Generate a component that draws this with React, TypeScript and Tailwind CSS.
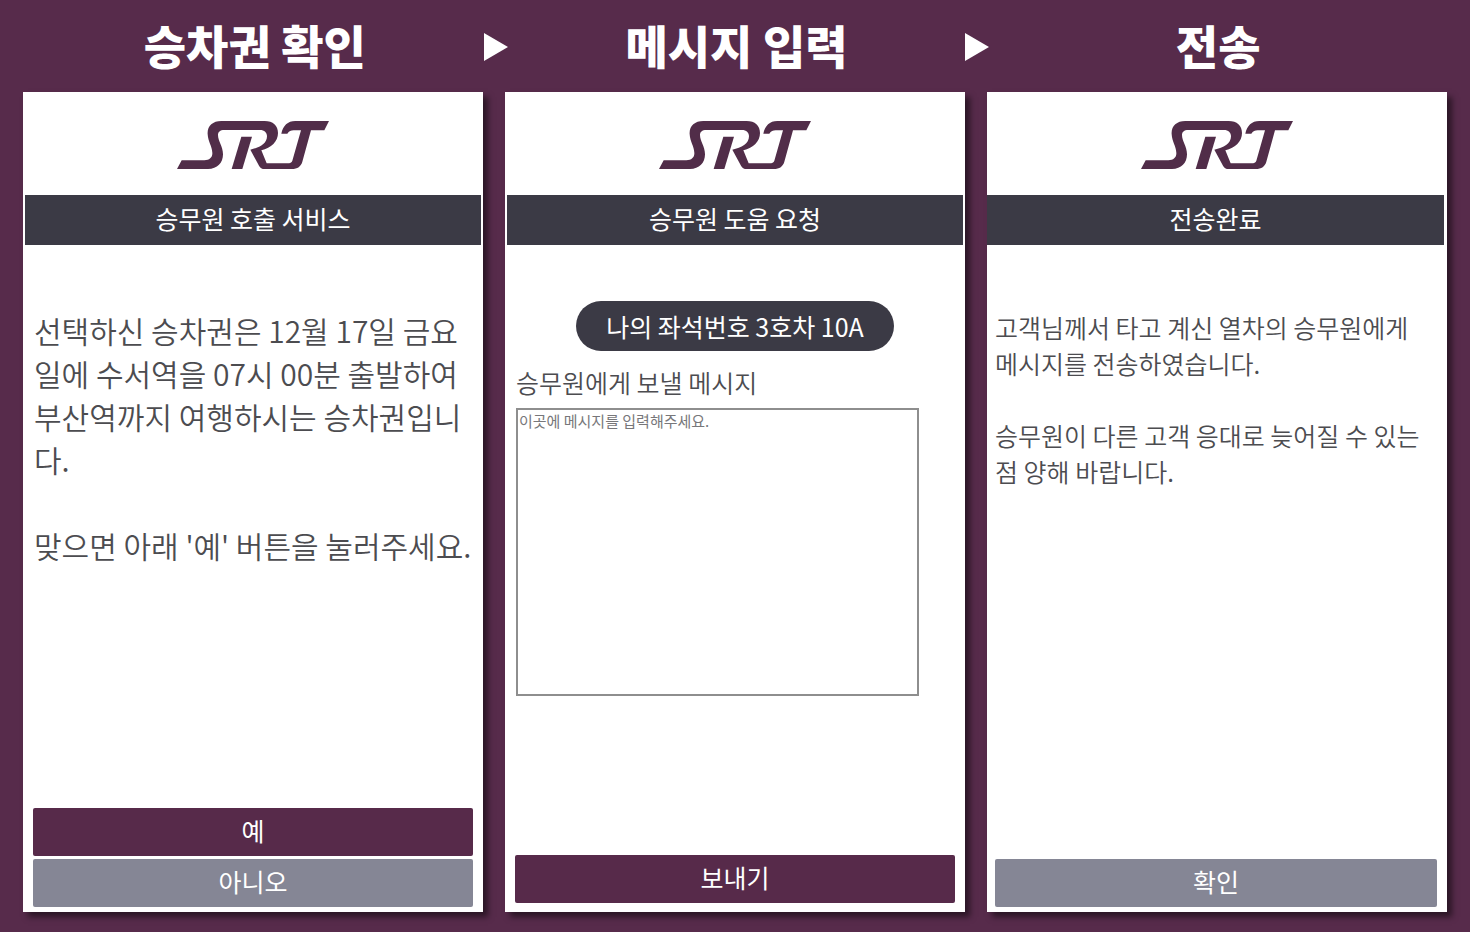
import type { ReactNode } from "react";

function SrtLogo() {
  return (
    <svg viewBox="52 46 456 144" className="h-12 w-[152px]" fill="#512d49" role="img" aria-label="SRT">
      <path d="M52 190L66 164H134C150 164 159 155 158 141C157 122 145 107 144 86C142 62 158 46 185 46H315C340 46 355 60 355 82C355 107 335 127 305 134L321 173H384C391 173 396 171 398 165L424 74H402C394 74 388 77 383 84H365C370 60 384 46 407 46H508L494 74H454L428 168C424 182 414 190 396 190H316C306 190 302 187 298 180L272 132C300 126 322 114 322 92C322 81 314 73 301 73H194C181 73 175 79 175 88C175 106 190 122 190 146C190 172 173 190 145 190Z" />
      <path d="M245 93H277L248 190H216Z" />
    </svg>
  );
}

function Arrow() {
  return (
    <svg viewBox="0 0 24 28" className="h-7 w-6 shrink-0" fill="#ffffff" aria-hidden="true">
      <path d="M0 0L24 14L0 28Z" />
    </svg>
  );
}

function StepTitle({ children }: { children: ReactNode }) {
  return (
    <h2 className="flex-1 pb-1.5 text-center text-[46px] leading-[60px] font-black text-white">{children}</h2>
  );
}

function Screen({
  title,
  barClass,
  footerClass,
  footer,
  children,
}: {
  title: string;
  barClass: string;
  footerClass: string;
  footer: ReactNode;
  children: ReactNode;
}) {
  return (
    <section className="flex min-w-0 flex-col bg-white shadow-[5px_5px_6px_rgba(0,0,0,0.5)]">
      <div className="flex justify-center pt-[29px] pb-[26px]">
        <SrtLogo />
      </div>
      <h3 className={`bg-[#3b3a45] pb-1 text-center text-[25px] leading-[46px] text-white ${barClass}`}>
        {title}
      </h3>
      <div className="flex-1">{children}</div>
      <div className={`flex flex-col gap-[3px] ${footerClass}`}>{footer}</div>
    </section>
  );
}

function ActionButton({ tone, children }: { tone: "primary" | "muted"; children: ReactNode }) {
  return (
    <button
      type="button"
      className={`rounded-xs pb-1 text-[25px] leading-[44px] text-white ${
        tone === "primary" ? "bg-[#572a4a]" : "bg-[#858695]"
      }`}
    >
      {children}
    </button>
  );
}

export default function App() {
  return (
    <main className="flex min-h-screen flex-col bg-[#572b4b] pb-5 font-['Noto_Sans_CJK_KR',sans-serif] text-[#4c4c50]">
      <header className="flex items-center pt-3.5 pr-[23px] pb-3 pl-[26px]">
        <StepTitle>승차권 확인</StepTitle>
        <Arrow />
        <StepTitle>메시지 입력</StepTitle>
        <Arrow />
        <StepTitle>전송</StepTitle>
      </header>
      <div className="grid flex-1 grid-cols-3 gap-[22px] px-[23px]">
        <Screen
          title="승무원 호출 서비스"
          barClass="mx-0.5"
          footerClass="px-[10px] pb-[5px]"
          footer={
            <>
              <ActionButton tone="primary">예</ActionButton>
              <ActionButton tone="muted">아니오</ActionButton>
            </>
          }
        >
          <div className="px-[11px] pt-16 text-[30px] leading-[43px] font-[350]">
            <p>
              선택하신 승차권은 12월 17일 금요
              <br />
              일에 수서역을 07시 00분 출발하여
              <br />
              부산역까지 여행하시는 승차권입니
              <br />
              다.
            </p>
            <p className="mt-[43px] whitespace-nowrap">맞으면 아래 '예' 버튼을 눌러주세요.</p>
          </div>
        </Screen>

        <Screen
          title="승무원 도움 요청"
          barClass="mx-0.5"
          footerClass="px-[10px] pb-[9px]"
          footer={<ActionButton tone="primary">보내기</ActionButton>}
        >
          <div className="flex flex-col items-start px-[11px] pt-14">
            <p className="self-center rounded-full bg-[#3b3a45] px-[30px] text-[25px] leading-[50px] text-white">
              나의 좌석번호 3호차 10A
            </p>
            <label htmlFor="message" className="mt-[13px] text-[25px] leading-9 font-[350]">
              승무원에게 보낼 메시지
            </label>
            <textarea
              id="message"
              placeholder="이곳에 메시지를 입력해주세요."
              className="mt-2 h-72 w-[92%] resize-none border-2 border-[#8e8e8e] bg-white px-px text-[15px] leading-[22px] placeholder:text-[#77777a]"
            />
          </div>
        </Screen>

        <Screen
          title="전송완료"
          barClass="mr-[3px]"
          footerClass="pr-[10px] pb-[5px] pl-2"
          footer={<ActionButton tone="muted">확인</ActionButton>}
        >
          <div className="px-2 pt-16 text-[25px] leading-9 font-[350]">
            <p>
              고객님께서 타고 계신 열차의 승무원에게
              <br />
              메시지를 전송하였습니다.
            </p>
            <p className="mt-9">
              승무원이 다른 고객 응대로 늦어질 수 있는
              <br />점 양해 바랍니다.
            </p>
          </div>
        </Screen>
      </div>
    </main>
  );
}
